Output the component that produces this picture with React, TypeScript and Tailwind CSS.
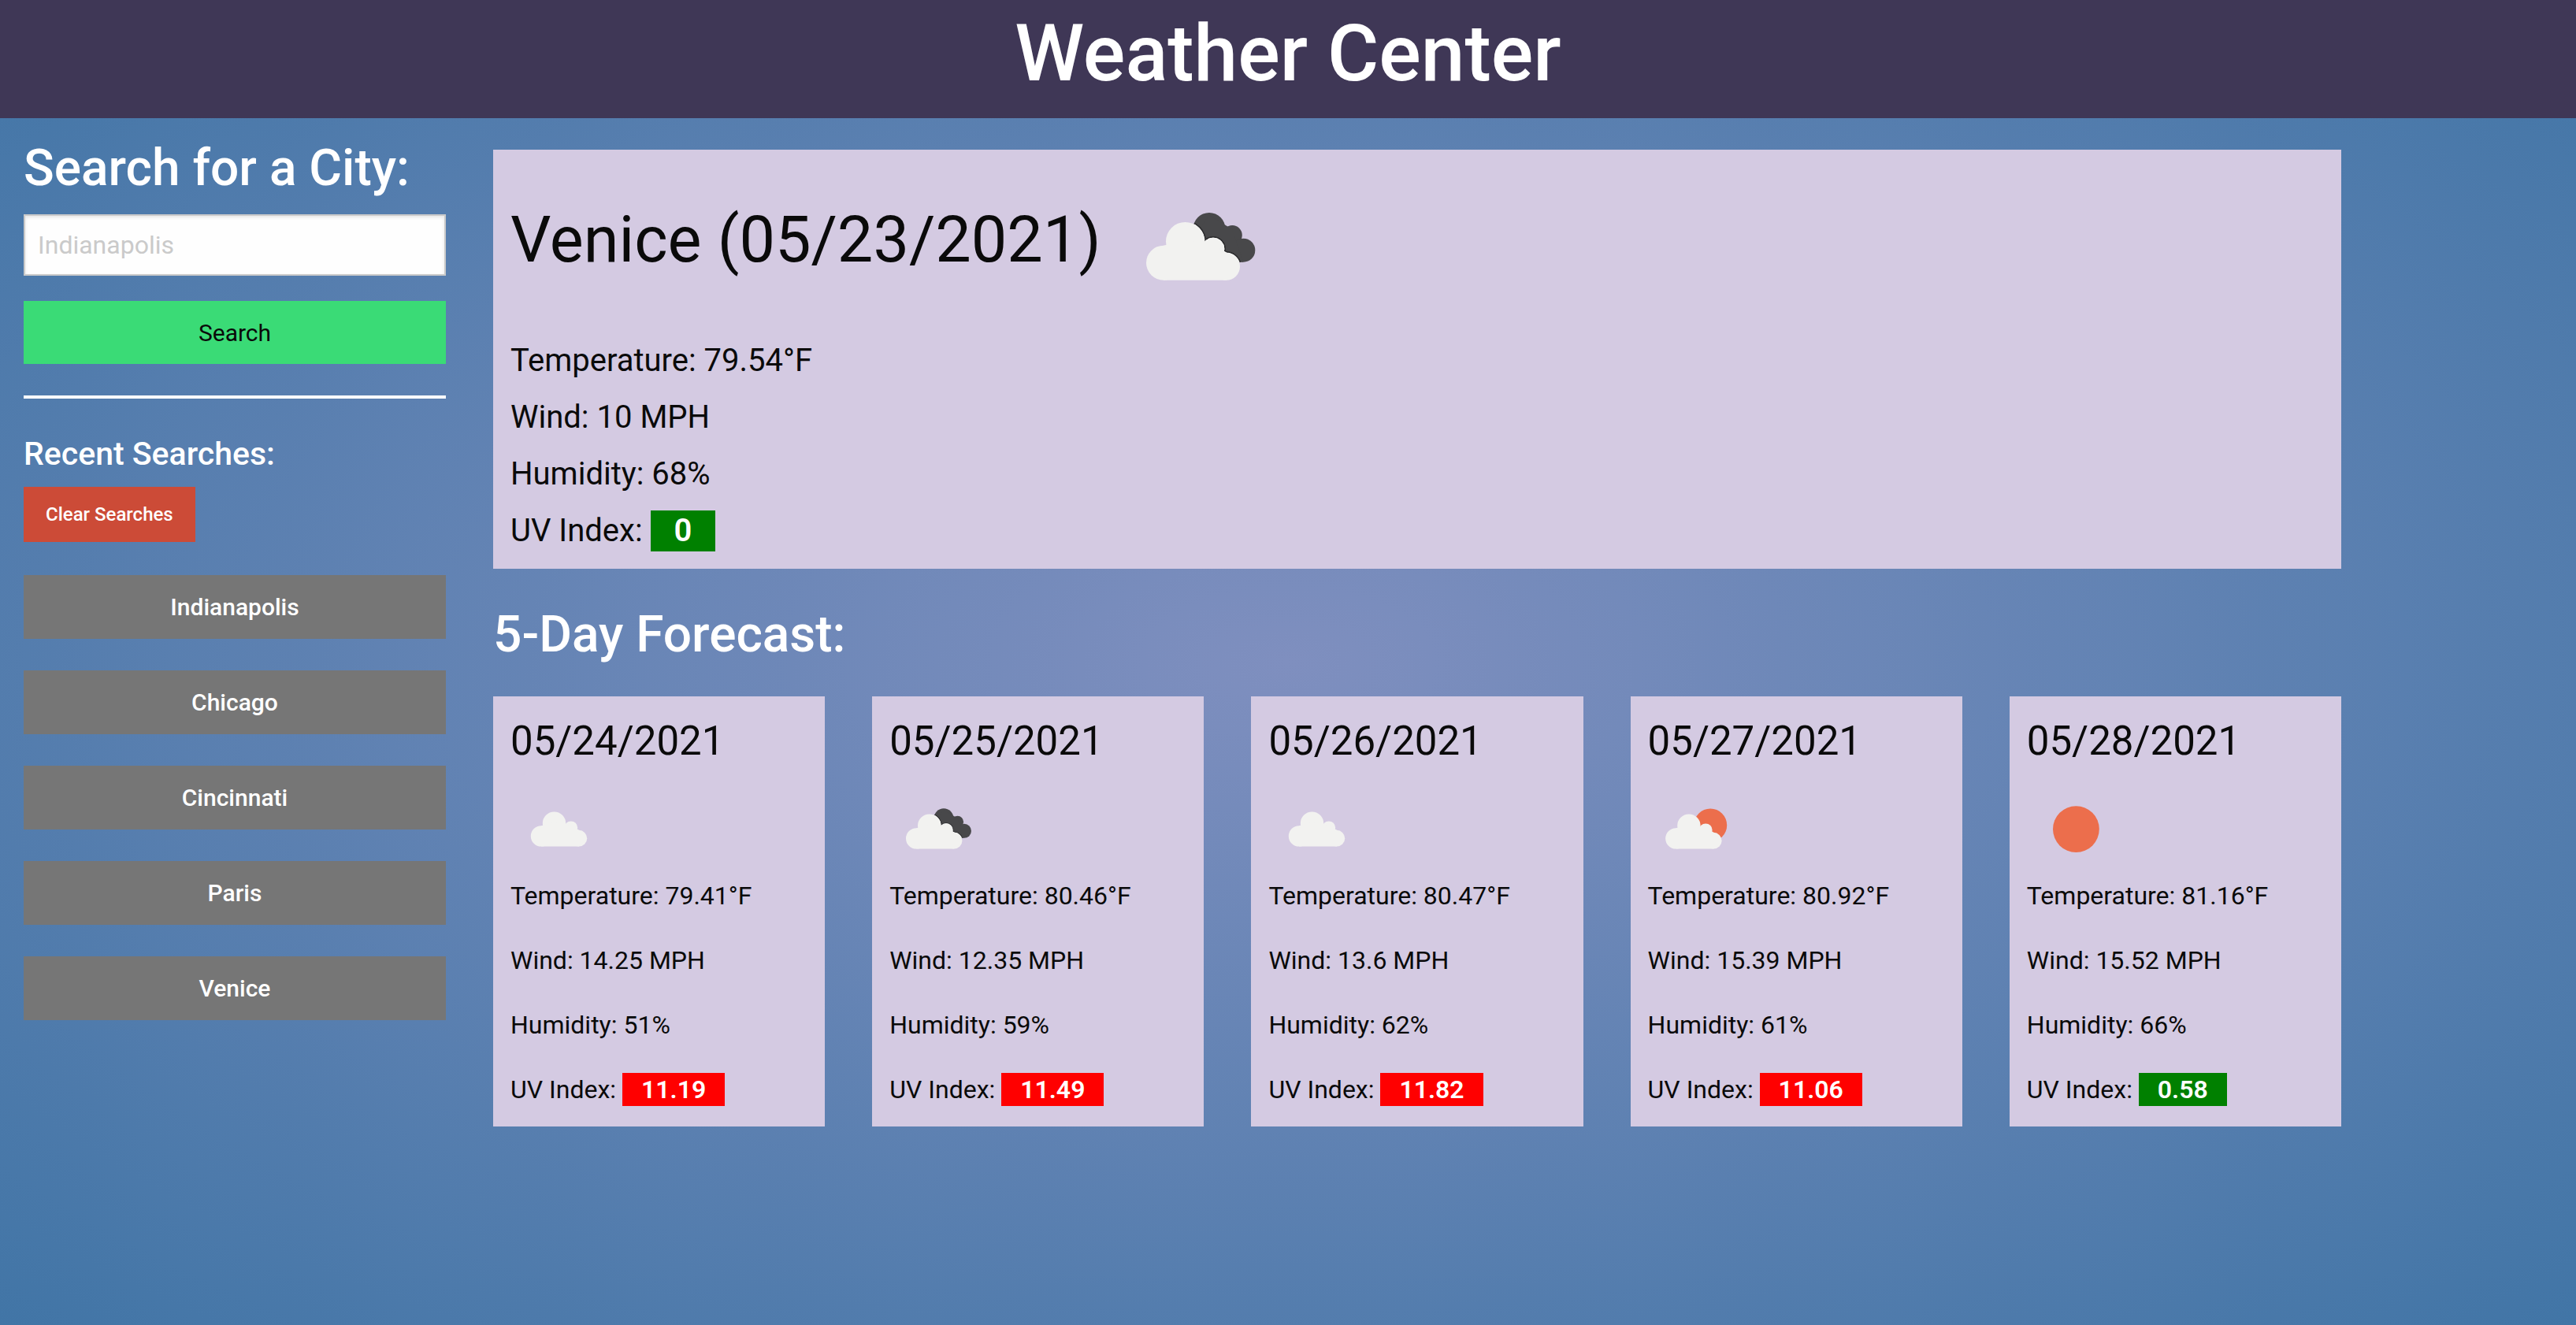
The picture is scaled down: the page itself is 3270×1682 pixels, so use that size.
import { useState } from "react";

type Sky = "clouds" | "broken" | "few" | "clear";

type Weather = {
  date: string;
  sky: Sky;
  temp: string;
  wind: string;
  humidity: string;
  uv: string;
};

const cities = ["Indianapolis", "Chicago", "Cincinnati", "Paris", "Venice"];

const current: Weather = {
  date: "05/23/2021",
  sky: "broken",
  temp: "79.54",
  wind: "10",
  humidity: "68",
  uv: "0",
};

const forecast: Weather[] = [
  { date: "05/24/2021", sky: "clouds", temp: "79.41", wind: "14.25", humidity: "51", uv: "11.19" },
  { date: "05/25/2021", sky: "broken", temp: "80.46", wind: "12.35", humidity: "59", uv: "11.49" },
  { date: "05/26/2021", sky: "clouds", temp: "80.47", wind: "13.6", humidity: "62", uv: "11.82" },
  { date: "05/27/2021", sky: "few", temp: "80.92", wind: "15.39", humidity: "61", uv: "11.06" },
  { date: "05/28/2021", sky: "clear", temp: "81.16", wind: "15.52", humidity: "66", uv: "0.58" },
];

function CloudShape() {
  return (
    <>
      <circle cx="57" cy="120.7" r="22" />
      <circle cx="84.5" cy="93.5" r="24.5" />
      <circle cx="120" cy="103" r="14" />
      <circle cx="136.7" cy="125.4" r="17.3" />
      <path d="M57 98.7 84 92 120 98 137 108.1V142.7H57Z" />
    </>
  );
}

function DarkCloudShape() {
  return (
    <>
      <circle cx="115" cy="77.5" r="20.5" />
      <circle cx="144.3" cy="85.5" r="12.5" />
      <circle cx="158.3" cy="104.7" r="15" />
      <path d="M115 60 144 78 158 119.7H110L97 86Z" />
    </>
  );
}

function WeatherIcon({ sky, className }: { sky: Sky; className: string }) {
  return (
    <svg viewBox="0 0 200 200" className={className} role="img" aria-label={sky}>
      {sky === "clear" && <circle cx="104" cy="101" r="49" fill="#ec6e4c" />}
      {sky === "clouds" && (
        <g fill="#f2f2f0" transform="translate(8 -5)">
          <CloudShape />
        </g>
      )}
      {sky === "few" && (
        <>
          <circle cx="132" cy="92.5" r="35" fill="#ec6e4c" />
          <g fill="#f2f2f0" transform="translate(2 0)">
            <CloudShape />
          </g>
        </>
      )}
      {sky === "broken" && (
        <>
          <clipPath id="dark-cloud">
            <DarkCloudShape />
          </clipPath>
          <g fill="#48484a">
            <DarkCloudShape />
          </g>
          <g clipPath="url(#dark-cloud)">
            <g fill="#2c2c2e" stroke="#2c2c2e" strokeWidth="4">
              <CloudShape />
            </g>
            <g fill="#ffffff" stroke="#ffffff" strokeWidth="1">
              <CloudShape />
            </g>
          </g>
          <g fill="#f2f2f0">
            <CloudShape />
          </g>
        </>
      )}
    </svg>
  );
}

function uvColor(uv: string) {
  return Number(uv) < 3 ? "bg-[#008000]" : "bg-[#ff0000]";
}

export default function App() {
  const [city, setCity] = useState("");

  return (
    <div className="min-h-screen bg-[radial-gradient(#7f8fbf,#4175a6)] font-['Roboto',sans-serif] text-[#0a0a0a]">
      <header className="bg-[#3f3756] pt-[18px] pb-8 text-center">
        <h1 className="text-[100px] leading-[100px] font-medium text-white">Weather Center</h1>
      </header>

      <div className="flex gap-[60px] pr-[298px] pl-[30px]">
        <aside className="flex w-[536px] shrink-0 flex-col pt-6">
          <form className="flex flex-col" onSubmit={(e) => e.preventDefault()}>
            <label htmlFor="city" className="text-[64px] leading-[80px] font-medium whitespace-nowrap text-white">
              Search for a City:
            </label>
            <input
              id="city"
              type="text"
              value={city}
              onChange={(e) => setCity(e.target.value)}
              placeholder="Indianapolis"
              className="mt-[18px] h-[78px] border-2 border-[#cacaca] bg-[#fefefe] px-4 text-[32px] shadow-[inset_0_2px_4px_rgba(10,10,10,0.1)] placeholder:text-[#cacaca]"
            />
            <button type="submit" className="mt-8 h-20 bg-[#3adb76] text-[30px]">
              Search
            </button>
          </form>
          <hr className="mt-10 border-t-4 border-white" />
          <h2 className="mt-10 text-[41px] leading-[60px] font-medium text-white">Recent Searches:</h2>
          <button type="button" className="mt-3 h-[70px] self-start bg-[#cc4b37] px-7 text-[24px] font-medium text-white">
            Clear Searches
          </button>
          <div className="mt-[42px] flex flex-col gap-10">
            {cities.map((name) => (
              <button key={name} type="button" className="h-[81px] bg-[#767676] text-[30px] font-medium text-white">
                {name}
              </button>
            ))}
          </div>
        </aside>

        <main className="min-w-0 flex-1 pt-10">
          <section className="bg-[#d4cae2] px-[22px] pt-[23px] pb-3">
            <div className="flex items-start gap-[22px]">
              <h2 className="text-[81px] leading-[184px]">Venice ({current.date})</h2>
              <WeatherIcon sky={current.sky} className="size-[200px]" />
            </div>
            <div className="mt-[9px] text-[40px] leading-[72px]">
              <p>Temperature: {current.temp}°F</p>
              <p>Wind: {current.wind} MPH</p>
              <p>Humidity: {current.humidity}%</p>
              <p>
                UV Index:{" "}
                <span className={`inline-block px-[30px] leading-[52px] font-semibold text-white ${uvColor(current.uv)}`}>
                  {current.uv}
                </span>
              </p>
            </div>
          </section>

          <h2 className="mt-11 text-[64px] leading-[80px] font-medium text-white">5-Day Forecast:</h2>
          <div className="mt-[38px] grid grid-cols-5 gap-[60px]">
            {forecast.map((day) => (
              <section key={day.date} className="bg-[#d4cae2] px-[22px] pt-[27px] pb-[22px]">
                <h3 className="text-[51px] leading-[60px]">{day.date}</h3>
                <WeatherIcon sky={day.sky} className="mt-[21px] size-[120px]" />
                <div className="flex flex-col gap-8 text-[32px] leading-[50px] whitespace-nowrap">
                  <p>Temperature: {day.temp}°F</p>
                  <p>Wind: {day.wind} MPH</p>
                  <p>Humidity: {day.humidity}%</p>
                  <p>
                    UV Index:{" "}
                    <span className={`inline-block px-6 leading-[42px] font-semibold text-white ${uvColor(day.uv)}`}>
                      {day.uv}
                    </span>
                  </p>
                </div>
              </section>
            ))}
          </div>
        </main>
      </div>
    </div>
  );
}
